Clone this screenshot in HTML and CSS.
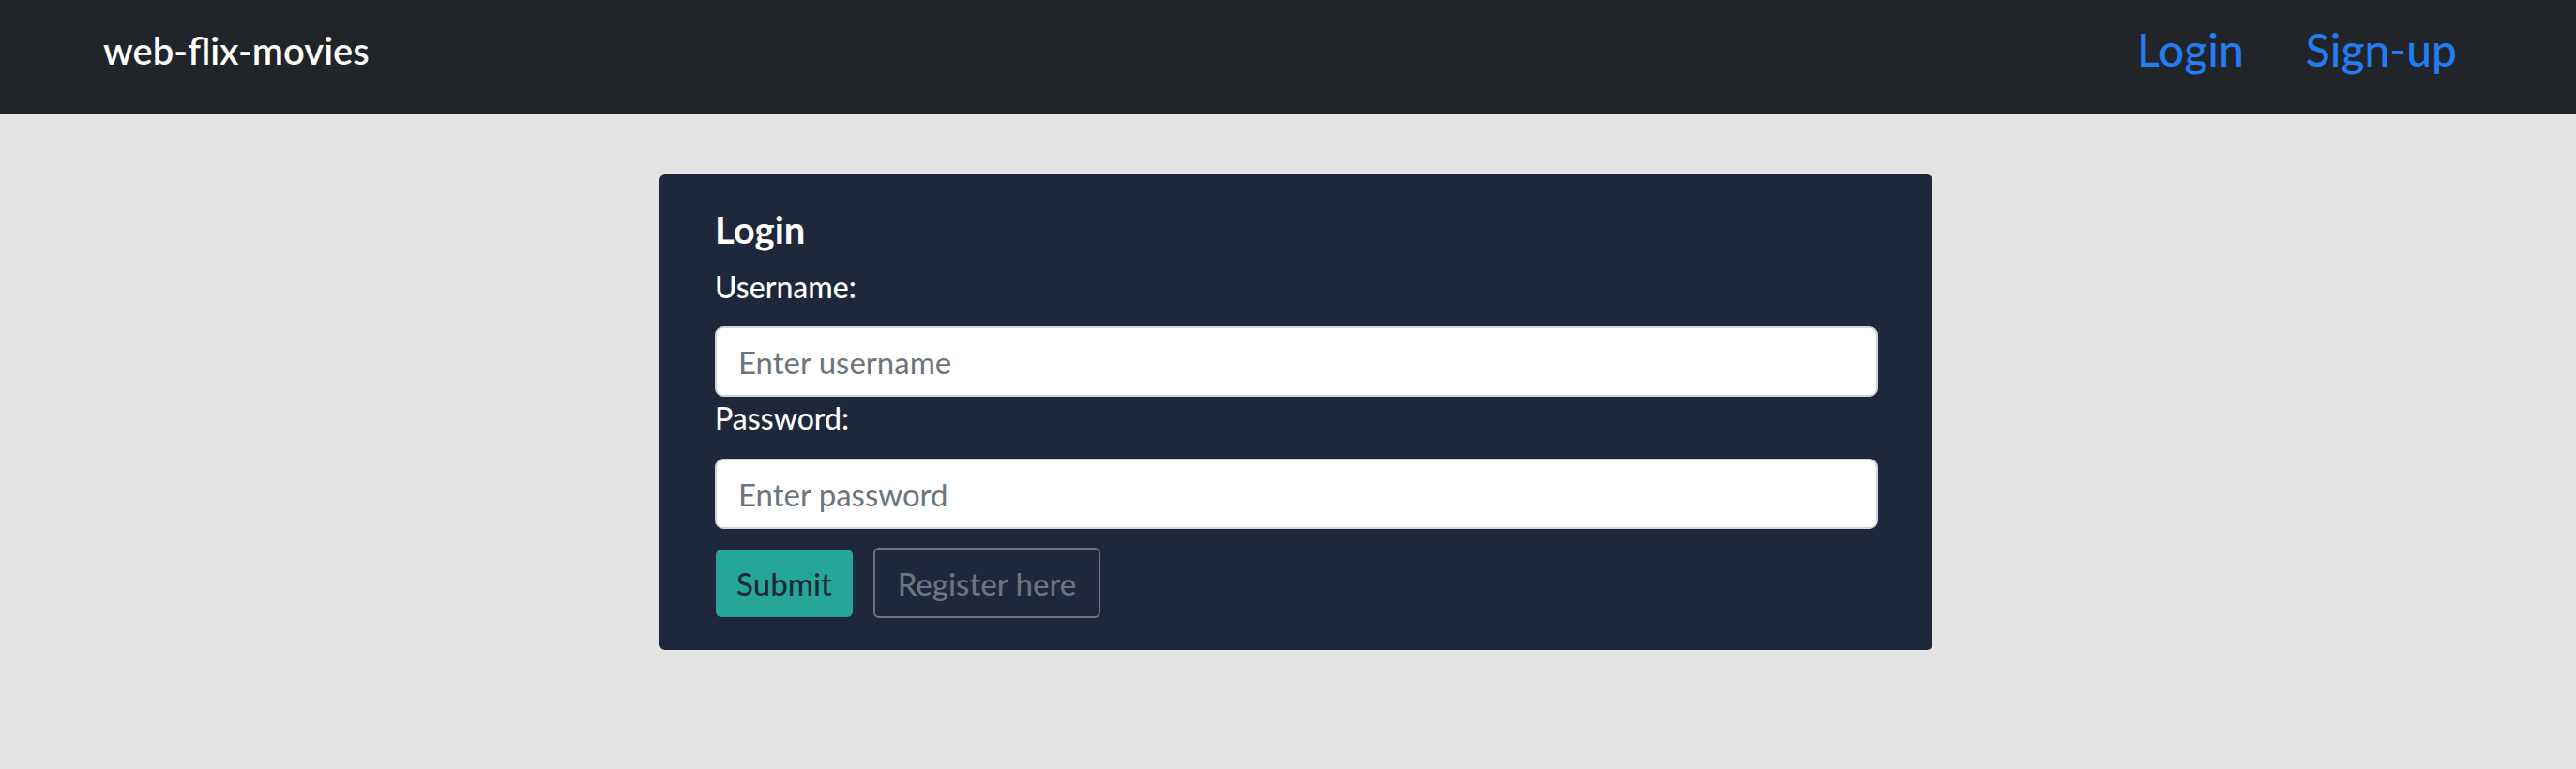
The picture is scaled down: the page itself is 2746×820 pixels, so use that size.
FILE: index.html
```html
<!DOCTYPE html>
<html lang="en">
<head>
<meta charset="utf-8">
<title>web-flix-movies</title>
<link rel="stylesheet" href="styles.css">
</head>
<body>
<nav class="navbar">
  <a class="brand" href="#">web-flix-movies</a>
  <div class="nav-links">
    <a class="nav-link" href="#">Login</a>
    <a class="nav-link" href="#">Sign-up</a>
  </div>
</nav>
<main class="main">
  <form class="card">
    <h2 class="card-title">Login</h2>
    <label class="label" for="username">Username:</label>
    <input class="input" id="username" type="text" placeholder="Enter username">
    <label class="label label-pw" for="password">Password:</label>
    <input class="input" id="password" type="password" placeholder="Enter password">
    <div class="actions">
      <button class="btn btn-submit" type="button">Submit</button>
      <button class="btn btn-register" type="button">Register here</button>
    </div>
  </form>
</main>
</body>
</html>
```

FILE: styles.css
```css
* { box-sizing: border-box; }
html, body { margin: 0; padding: 0; }
body {
  background: #e3e3e3;
  font-family: Lato, "Noto Sans", sans-serif;
  min-height: 820px;
}
.navbar {
  height: 122px;
  background: #212529;
  display: flex;
  align-items: flex-start;
  justify-content: space-between;
  padding: 0 127px 0 110px;
}
.brand {
  color: #ffffff;
  text-decoration: none;
  font-size: 40px;
  font-weight: 600;
  line-height: 48px;
  margin-top: 30px;
}
.nav-links {
  display: flex;
  gap: 66px;
  padding-top: 24px;
}
.nav-link {
  color: #247cf1;
  text-decoration: none;
  font-size: 48px;
  font-weight: 500;
  line-height: 58px;
}
.main {
  padding-top: 64px;
  padding-left: 703px;
}
.card {
  width: 1357px;
  background: #1f273b;
  border-radius: 6px;
  padding: 35px 58px 34px 59px;
  display: flex;
  flex-direction: column;
}
.card-title {
  margin: 0 0 17px 0;
  color: #ffffff;
  font-size: 40px;
  line-height: 48px;
  font-weight: 700;
}
.label {
  color: #ffffff;
  font-size: 32px;
  line-height: 40px;
  font-weight: 500;
  margin-bottom: 22px;
}
.label-pw { margin-top: 3px; margin-bottom: 23px; }
.input {
  height: 75px;
  width: 100%;
  border: 2px solid #ced4da;
  border-radius: 9px;
  background: #ffffff;
  padding: 0 23px;
  font-family: Lato, "Noto Sans", sans-serif;
  font-size: 33px;
  color: #212529;
}
.input::placeholder { color: #6c757d; }
.actions {
  display: flex;
  align-items: center;
  gap: 22px;
  margin-top: 20px;
}
.btn {
  border-radius: 6px;
  font-family: Lato, "Noto Sans", sans-serif;
  font-size: 33px;
  font-weight: 500;
  display: flex;
  align-items: center;
  justify-content: center;
  cursor: pointer;
  padding: 0;
  white-space: nowrap;
}
.btn-submit {
  width: 146px;
  height: 72px;
  margin-left: 1px;
  background: #26a69a;
  border: none;
  color: #1f273b;
}
.btn-register {
  width: 242px;
  height: 75px;
  background: transparent;
  border: 2px solid #6c757d;
  color: #6c757d;
}
```
